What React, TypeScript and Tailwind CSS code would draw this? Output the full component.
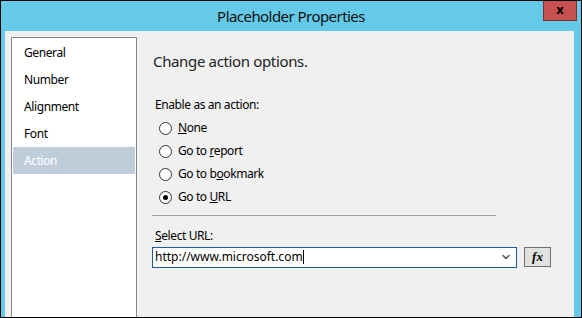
import { ChevronDown } from 'lucide-react';

const font = { fontFamily: '"Noto Sans", "Open Sans", Arial, sans-serif' };

function Radio({ checked, children }: { checked?: boolean; children: React.ReactNode }) {
  return (
    <div className="flex items-center h-[23px]">
      <span className="ml-[6px] w-[13px] h-[13px] rounded-full border border-[#333] bg-white flex items-center justify-center">
        {checked && <span className="w-[5px] h-[5px] rounded-full bg-black" />}
      </span>
      <span className="ml-[6px] text-[12px] tracking-[-0.4px] text-black">{children}</span>
    </div>
  );
}

export default function App() {
  const pages = ['General', 'Number', 'Alignment', 'Font', 'Action'];
  return (
    <div className="w-[582px] h-[318px] border border-black bg-[#64cae8] overflow-hidden flex flex-col" style={font}>
      {/* Title bar */}
      <div className="relative h-[30px] flex items-center justify-center shrink-0">
        <span className="text-[15px] tracking-[-0.55px] text-[#111] pt-[1px]">Placeholder Properties</span>
        <div className="absolute right-[4px] top-[-1px] w-[34px] h-[21px] bg-[#c75050] border border-[#7a3030] flex items-center justify-center">
          <span className="text-[13px] font-bold text-black leading-none mb-[2px]">x</span>
        </div>
      </div>

      {/* Body */}
      <div className="flex-1 ml-[4px] mr-[7px] bg-[#f0f0f0] flex min-h-0">
        {/* Page list */}
        <div className="ml-[6px] mt-[6px] w-[126px] h-[300px] border border-[#82878f] bg-white pt-[1px] px-[1px] shrink-0">
          {pages.map((p) => (
            <div
              key={p}
              className={`h-[27px] pl-[11px] flex items-center text-[12px] tracking-[-0.4px] ${p === 'Action' ? 'bg-[#bfcddb] text-white' : 'text-black'}`}
            >
              {p}
            </div>
          ))}
        </div>

        {/* Right panel */}
        <div className="ml-[16px] flex-1 pr-[23px]">
          <div className="mt-[19px] text-[15px] tracking-[-0.35px] text-[#222]">Change action options.</div>
          <div className="mt-[23px] ml-[2px] text-[12px] tracking-[-0.4px] text-black">Enable as an action:</div>
          <div className="mt-[3px]">
            <Radio><span className="underline">N</span>one</Radio>
            <Radio>Go to <span className="underline">r</span>eport</Radio>
            <Radio>Go to b<span className="underline">o</span>okmark</Radio>
            <Radio checked>Go to <span className="underline">U</span>RL</Radio>
          </div>
          <div className="mt-[6px] mr-[55px] h-px bg-[#a0a0a0] -ml-[1px]" />
          <div className="mt-[11px] ml-[2px] text-[12px] tracking-[-0.4px] text-black">
            <span className="underline">S</span>elect URL:
          </div>
          <div className="mt-[2px] flex items-center -ml-[1px]">
            <div className="w-[365px] h-[21px] border border-[#1e5d9a] bg-white flex items-center pl-[2px] pr-[4px]">
              <span className="text-[12px] text-black">http://www.microsoft.com</span>
              <span className="w-px h-[14px] bg-black" />
              <span className="flex-1" />
              <ChevronDown size={12} strokeWidth={3} className="text-[#555]" />
            </div>
            <div className="ml-[7px] w-[27px] h-[20px] border border-[#707070] bg-[#e1e1e1] flex items-center justify-center">
              <span className="text-[13px] font-bold italic text-black" style={{ fontFamily: '"Liberation Serif", serif' }}>fx</span>
            </div>
          </div>
        </div>
      </div>
    </div>
  );
}
